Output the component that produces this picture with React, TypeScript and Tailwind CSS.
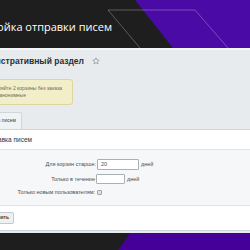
import React from 'react';

const Star = () => (
  <svg width="8" height="8" viewBox="0 0 24 24" fill="none" stroke="#8b949a" strokeWidth="2.2" strokeLinejoin="round">
    <path d="M12 2.5l2.9 6.2 6.6.8-4.9 4.6 1.3 6.6L12 17.4l-5.9 3.3 1.3-6.6-4.9-4.6 6.6-.8z" />
  </svg>
);

export default function App() {
  return (
    <div className="w-[250px] h-[250px] overflow-hidden flex flex-col bg-[#e7ebee] font-['Liberation_Sans',Arial,sans-serif]">
      {/* top bar */}
      <div className="relative h-[48px] shrink-0 bg-[#1e1e1e] flex items-center pt-[6px] overflow-hidden">
        <svg className="absolute inset-0" width="250" height="48" viewBox="0 0 250 48">
          <polygon points="135,0 250,0 250,48 173,48" fill="#4a0aa6" />
          <polyline points="140,48 108,10 195,10 228,48" fill="none" stroke="rgba(255,255,255,0.35)" strokeWidth="0.8" />
        </svg>
        <div className="relative w-[112px] shrink-0 flex justify-end whitespace-nowrap">
          <span className="shrink-0 text-white text-[11px] font-['Open_Sans',sans-serif]">Настройка отправки писем</span>
        </div>
      </div>

      <div className="h-[2px] bg-[#f3f5f6]" />

      {/* page title */}
      <div className="flex items-center h-[18px] mt-[2px]">
        <div className="w-[84px] shrink-0 flex justify-end whitespace-nowrap">
          <span className="shrink-0 text-[8.5px] font-bold text-[#2a2e31]">Административный раздел</span>
        </div>
        <span className="ml-[8px] flex"><Star /></span>
      </div>

      {/* notice */}
      <div className="mt-[9px] ml-[-10px] w-[83px] h-[26px] rounded-[3px] border border-[#dcd69f] bg-[#f2eec8] flex flex-col justify-center text-[5px] leading-[7px] text-[#6f6c55]">
        <div className="flex justify-end whitespace-nowrap w-[71px]"><span className="shrink-0">Удаляйте 2 корзины без заказа</span></div>
        <div className="flex justify-end whitespace-nowrap w-[35px]"><span className="shrink-0">Неанонимные</span></div>
      </div>

      {/* tab */}
      <div className="mt-[7px] ml-[-10px] w-[32px] h-[17px] bg-[#f0f3f4] border border-b-0 border-[#cfd5d8] rounded-t-[2px] flex items-center justify-end pr-[5px] whitespace-nowrap">
        <span className="shrink-0 text-[5px] text-[#3b3f42]">Отправка писем</span>
      </div>

      {/* card */}
      <div className="flex flex-col bg-white border-t border-[#cfd5d8]">
        <div className="h-[20px] flex items-center border-b border-[#dfe4e6]">
          <div className="w-[32px] shrink-0 flex justify-end whitespace-nowrap">
            <span className="shrink-0 text-[6.5px] text-[#2f3336]">Отправка писем</span>
          </div>
        </div>

        <div className="h-[56px] bg-[#f5f7f8] border-b border-[#dfe4e6] flex flex-col pt-[9px] text-[5.5px] text-[#4a4f53]">
          <div className="flex items-center h-[11px]">
            <div className="w-[96px] text-right whitespace-nowrap">Для корзин старше:</div>
            <div className="ml-[1px] w-[42px] h-[11px] bg-white border border-[#a9b1b6] rounded-[1px] flex items-center pl-[3px]">20</div>
            <span className="ml-[2px]">дней</span>
          </div>
          <div className="flex items-center h-[10px] mt-[4px]">
            <div className="w-[95px] text-right whitespace-nowrap">Только в течение</div>
            <div className="ml-[1px] w-[29px] h-[10px] bg-white border border-[#a9b1b6] rounded-[1px]" />
            <span className="ml-[2px]">дней</span>
          </div>
          <div className="flex items-center h-[6px] mt-[5px]">
            <div className="w-[95px] text-right whitespace-nowrap">Только новым пользователям:</div>
            <div className="ml-[2px] w-[5px] h-[5px] bg-[#dfe3e6] border border-[#9fa7ac] rounded-[1px]" />
          </div>
        </div>

        <div className="h-[25px] flex items-center border-b border-[#cfd5d8]">
          <div className="ml-[-20px] w-[34px] h-[12px] rounded-[2px] border border-[#c3c9cc] bg-[#eef1f2] flex items-center justify-end pr-[4px] whitespace-nowrap">
            <span className="shrink-0 text-[5px] font-bold text-[#3b3f42]">Сохранить</span>
          </div>
        </div>
      </div>

      {/* bottom bar */}
      <div className="relative mt-[2px] flex-1 bg-[#1e1e1e] overflow-hidden">
        <svg className="absolute inset-0" width="250" height="30" viewBox="0 0 250 30">
          <polygon points="130,0 250,0 250,30 109,30" fill="#46009a" />
        </svg>
      </div>
    </div>
  );
}
